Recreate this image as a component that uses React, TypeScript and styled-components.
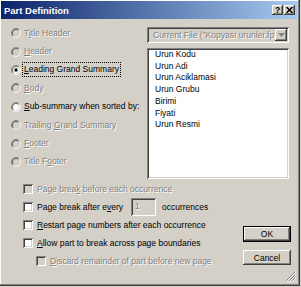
import React from "react";
import styled, { createGlobalStyle } from "styled-components";

const GlobalStyle = createGlobalStyle`
  body {
    margin: 0;
    background: #d4d0c8;
    font-family: "Liberation Sans", Arial, sans-serif;
  }
`;

const Window = styled.div`
  position: relative;
  width: 301px;
  height: 287px;
  box-sizing: border-box;
  padding: 1px 4px 4px 1px;
  background: #d4d0c8;
  box-shadow: inset -1px -1px #d4d0c8, inset -2px -2px #404040,
    inset -3px -3px #808080, inset 1px 1px #ffffff;
  display: flex;
  flex-direction: column;
`;

const TitleBar = styled.div`
  height: 18px;
  display: flex;
  align-items: center;
  justify-content: space-between;
  padding: 0 2px 0 3px;
  background: linear-gradient(to right, #0a246a, #a6caf0);
`;

const TitleText = styled.div`
  color: #ffffff;
  font-weight: bold;
  font-size: 9.5px;
`;

const TitleButtons = styled.div`
  display: flex;
  gap: 1px;
`;

const TitleButton = styled.div`
  width: 11px;
  height: 10px;
  display: flex;
  align-items: center;
  justify-content: center;
  background: #d4d0c8;
  box-shadow: inset -1px -1px #404040, inset 1px 1px #ffffff,
    inset -2px -2px #808080;
  font-size: 8.5px;
  font-weight: bold;
  color: #000;
  line-height: 1;
`;

const Body = styled.div`
  flex: 1;
  display: flex;
  flex-direction: column;
  padding-left: 10px;
  font-size: 8.5px;
`;

const TopArea = styled.div`
  display: flex;
  padding-top: 5px;
`;

const RadioColumn = styled.div`
  width: 136px;
  display: flex;
  flex-direction: column;
`;

const RadioRow = styled.div`
  height: 18.4px;
  display: flex;
  align-items: center;
  gap: 3px;
`;

const Label = styled.span<{ $disabled?: boolean; $focus?: boolean }>`
  color: ${(p) => (p.$disabled ? "#808080" : "#000000")};
  text-shadow: ${(p) => (p.$disabled ? "1px 1px #ffffff" : "none")};
  white-space: nowrap;
  outline: ${(p) => (p.$focus ? "1px dotted #000000" : "none")};
  outline-offset: 1px;
  line-height: 11px;
`;

const RightColumn = styled.div`
  width: 142px;
  padding-top: 3px;
  display: flex;
  flex-direction: column;
  gap: 5px;
`;

const Combo = styled.div`
  height: 16px;
  box-sizing: border-box;
  display: flex;
  align-items: center;
  padding: 2px;
  background: #d4d0c8;
  box-shadow: inset 1px 1px #808080, inset -1px -1px #ffffff,
    inset 2px 2px #404040, inset -2px -2px #d4d0c8;
`;

const ComboText = styled.div`
  flex: 1;
  overflow: hidden;
  white-space: nowrap;
  padding-left: 4px;
  color: #808080;
  text-shadow: 1px 1px #ffffff;
`;

const ComboArrow = styled.div`
  width: 12px;
  height: 12px;
  display: flex;
  align-items: center;
  justify-content: center;
  background: #d4d0c8;
  box-shadow: inset -1px -1px #404040, inset 1px 1px #ffffff,
    inset -2px -2px #808080;
`;

const ListBox = styled.div`
  height: 131px;
  box-sizing: border-box;
  padding: 1px 2px 2px 8px;
  background: #ffffff;
  box-shadow: inset 1px 1px #808080, inset -1px -1px #ffffff,
    inset 2px 2px #404040, inset -2px -2px #d4d0c8;
`;

const ListItem = styled.div`
  line-height: 11.7px;
  color: #000;
  white-space: nowrap;
`;

const BottomArea = styled.div`
  display: flex;
  padding-top: 1px;
  padding-right: 6px;
`;

const CheckColumn = styled.div`
  flex: 1;
  display: flex;
  flex-direction: column;
  padding-left: 12px;
`;

const CheckRow = styled.div<{ $indent?: number }>`
  height: 18px;
  display: flex;
  align-items: center;
  gap: 4px;
  padding-left: ${(p) => p.$indent ?? 0}px;
`;

const CheckBox = styled.div<{ $disabled?: boolean }>`
  width: 10px;
  height: 10px;
  flex: none;
  background: ${(p) => (p.$disabled ? "#d4d0c8" : "#ffffff")};
  box-shadow: inset 1px 1px #808080, inset -1px -1px #ffffff,
    inset 2px 2px #404040, inset -2px -2px #d4d0c8;
`;

const NumberBox = styled.div`
  width: 25px;
  height: 18px;
  box-sizing: border-box;
  margin-left: 4px;
  margin-right: 2px;
  padding: 3px 0 0 4px;
  background: #d4d0c8;
  color: #808080;
  text-shadow: 1px 1px #ffffff;
  box-shadow: inset 1px 1px #808080, inset -1px -1px #ffffff,
    inset 2px 2px #404040, inset -2px -2px #d4d0c8;
`;

const ButtonColumn = styled.div`
  display: flex;
  flex-direction: column;
  gap: 8px;
  padding-top: 46px;
`;

const Button = styled.div<{ $default?: boolean }>`
  width: 48px;
  height: 16px;
  box-sizing: border-box;
  display: flex;
  align-items: center;
  justify-content: center;
  color: #000;
  background: #d4d0c8;
  border: 1px solid ${(p) => (p.$default ? "#000000" : "transparent")};
  box-shadow: ${(p) =>
    p.$default
      ? "inset -1px -1px #404040, inset 1px 1px #ffffff, inset -2px -2px #808080"
      : "inset -1px -1px #404040, inset 1px 1px #ffffff, inset -2px -2px #808080"};
  ${(p) => (!p.$default ? "border: none; height: 15px;" : "")}
`;

const Grip = styled.svg`
  position: absolute;
  right: 5px;
  bottom: 5px;
`;

const Radio = ({ checked, disabled }: { checked?: boolean; disabled?: boolean }) => (
  <svg width="10" height="10" viewBox="0 0 12 12">
    <circle cx="6" cy="6" r="5" fill={disabled ? "#d4d0c8" : "#ffffff"} />
    <path d="M9.89 2.11 A5.5 5.5 0 0 0 2.11 9.89" stroke="#808080" fill="none" />
    <path d="M9.89 2.11 A5.5 5.5 0 0 1 2.11 9.89" stroke="#ffffff" fill="none" />
    <path d="M9.18 2.82 A4.5 4.5 0 0 0 2.82 9.18" stroke="#404040" fill="none" />
    <path d="M9.18 2.82 A4.5 4.5 0 0 1 2.82 9.18" stroke="#d4d0c8" fill="none" />
    {checked && <circle cx="6" cy="6" r="2" fill="#000000" />}
  </svg>
);

const radios: { pre: string; key: string; post: string; disabled?: boolean; checked?: boolean }[] = [
  { pre: "T", key: "i", post: "tle Header", disabled: true },
  { pre: "", key: "H", post: "eader", disabled: true },
  { pre: "", key: "L", post: "eading Grand Summary", checked: true },
  { pre: "", key: "B", post: "ody", disabled: true },
  { pre: "", key: "S", post: "ub-summary when sorted by:" },
  { pre: "Trailing ", key: "G", post: "rand Summary", disabled: true },
  { pre: "", key: "F", post: "ooter", disabled: true },
  { pre: "Title F", key: "o", post: "oter", disabled: true },
];

const fields = [
  "Urun Kodu",
  "Urun Adi",
  "Urun Aciklamasi",
  "Urun Grubu",
  "Birimi",
  "Fiyati",
  "Urun Resmi",
];

const App = () => (
  <>
    <GlobalStyle />
    <Window>
      <TitleBar>
        <TitleText>Part Definition</TitleText>
        <TitleButtons>
          <TitleButton>?</TitleButton>
          <TitleButton>
            <svg width="7" height="6" viewBox="0 0 7 6">
              <path d="M0.5 0 L6.5 6 M6.5 0 L0.5 6" stroke="#000" strokeWidth="1.4" />
            </svg>
          </TitleButton>
        </TitleButtons>
      </TitleBar>
      <Body>
        <TopArea>
          <RadioColumn>
            {radios.map((r) => (
              <RadioRow key={r.pre + r.key + r.post}>
                <Radio checked={r.checked} disabled={r.disabled} />
                <Label $disabled={r.disabled} $focus={r.checked}>
                  {r.pre}
                  <u>{r.key}</u>
                  {r.post}
                </Label>
              </RadioRow>
            ))}
          </RadioColumn>
          <RightColumn>
            <Combo>
              <ComboText>Current File ("Kopyası urunler.fp!")</ComboText>
              <ComboArrow>
                <svg width="7" height="4" viewBox="0 0 7 4">
                  <path d="M0 0 H7 L3.5 4 Z" fill="#808080" />
                </svg>
              </ComboArrow>
            </Combo>
            <ListBox>
              {fields.map((f) => (
                <ListItem key={f}>{f}</ListItem>
              ))}
            </ListBox>
          </RightColumn>
        </TopArea>
        <BottomArea>
          <CheckColumn>
            <CheckRow>
              <CheckBox $disabled />
              <Label $disabled>
                Page brea<u>k</u> before each occurrence
              </Label>
            </CheckRow>
            <CheckRow>
              <CheckBox />
              <Label>
                Page break after e<u>v</u>ery
              </Label>
              <NumberBox>1</NumberBox>
              <Label>occurrences</Label>
            </CheckRow>
            <CheckRow>
              <CheckBox />
              <Label>
                <u>R</u>estart page numbers after each occurrence
              </Label>
            </CheckRow>
            <CheckRow>
              <CheckBox />
              <Label>
                <u>A</u>llow part to break across page boundaries
              </Label>
            </CheckRow>
            <CheckRow $indent={13}>
              <CheckBox $disabled />
              <Label $disabled>
                <u>D</u>iscard remainder of part before new page
              </Label>
            </CheckRow>
          </CheckColumn>
          <ButtonColumn>
            <Button $default>OK</Button>
            <Button>Cancel</Button>
          </ButtonColumn>
        </BottomArea>
      </Body>
      <Grip width="11" height="11" viewBox="0 0 11 11">
        <path d="M10 1 L1 10 M10 4 L4 10 M10 7 L7 10" stroke="#808080" strokeWidth="1" />
        <path d="M11 1 L1 11 M11 4 L4 11 M11 7 L7 11" stroke="#ffffff" strokeWidth="1" />
      </Grip>
    </Window>
  </>
);

export default App;
